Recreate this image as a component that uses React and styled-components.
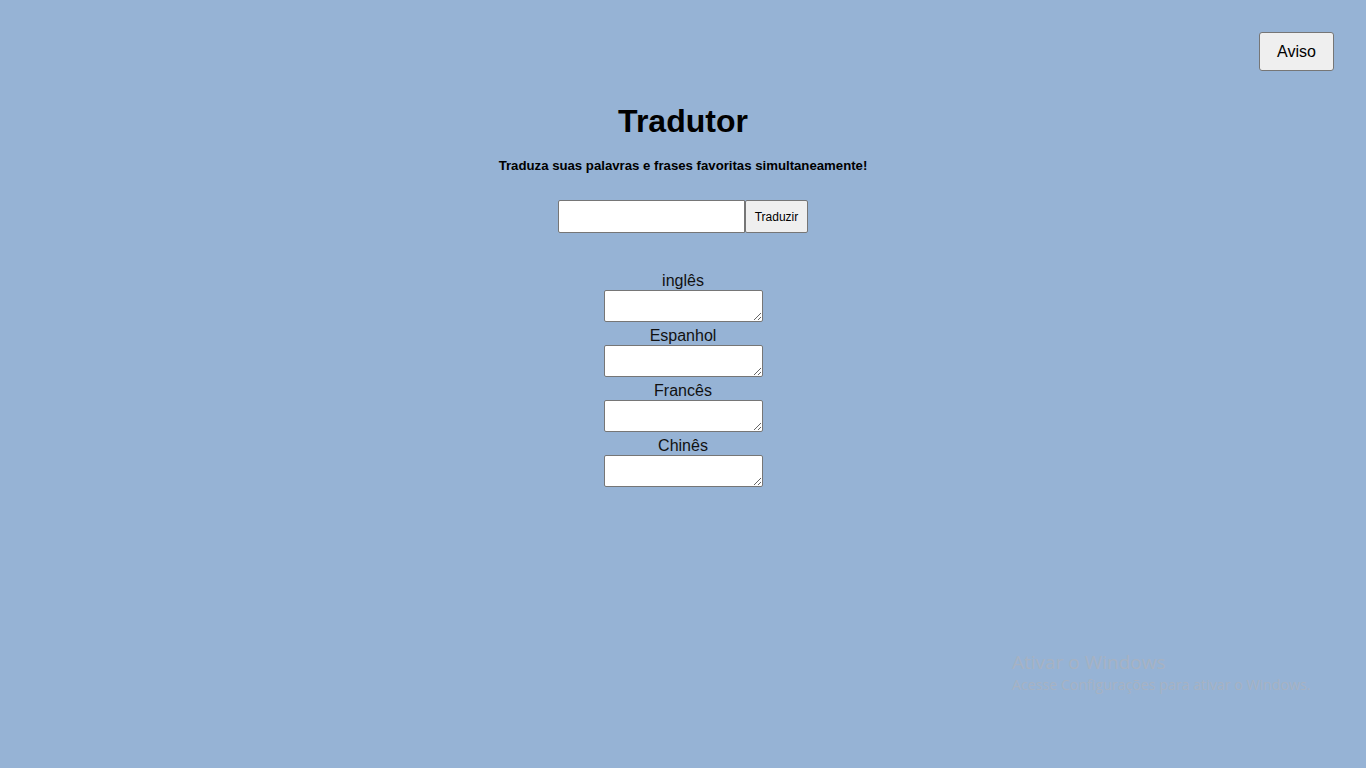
import React from "react";
import styled, { createGlobalStyle } from "styled-components";

const GlobalStyle = createGlobalStyle`
  html, body {
    margin: 0;
    padding: 0;
    background: #96b3d5;
    font-family: "Liberation Sans", Arial, sans-serif;
  }
  #root { min-height: 768px; }
`;

const Page = styled.div`
  position: relative;
  min-height: 768px;
  display: flex;
  flex-direction: column;
  align-items: stretch;
`;

const Header = styled.header`
  display: flex;
  justify-content: flex-end;
  padding: 32px 32px 0 0;
`;

const NativeButton = styled.button`
  box-sizing: border-box;
  font-family: "Liberation Sans", Arial, sans-serif;
  background: #efefef;
  color: #000;
  border: 1px solid #767676;
  border-radius: ${(p) => (p.$large ? "3px" : "2px")};
  font-size: ${(p) => (p.$large ? "16px" : "12px")};
  width: ${(p) => p.$w}px;
  height: ${(p) => p.$h}px;
  padding: 0;
  cursor: pointer;
`;

const Main = styled.main`
  display: flex;
  flex-direction: column;
  align-items: center;
`;

const Title = styled.h1`
  margin: 32px 0 0;
  font-size: 32px;
  line-height: 37px;
  font-weight: bold;
`;

const Subtitle = styled.p`
  margin: 18px 0 0;
  font-size: 13.2px;
  line-height: 15px;
  font-weight: bold;
`;

const SearchRow = styled.div`
  display: flex;
  margin-top: 27px;
`;

const TextInput = styled.input`
  box-sizing: border-box;
  width: 187px;
  height: 33px;
  border: 1px solid #767676;
  border-radius: 2px 0 0 2px;
  background: #fff;
  margin: 0;
  padding: 1px 2px;
  font-size: 13px;
`;

const Results = styled.div`
  display: flex;
  flex-direction: column;
  align-items: center;
  gap: 4px;
  margin-top: 38px;
`;

const Group = styled.div`
  display: flex;
  flex-direction: column;
  align-items: center;
`;

const Label = styled.label`
  font-size: 16px;
  line-height: 19px;
  color: #111;
`;

const Output = styled.textarea`
  box-sizing: border-box;
  width: 159px;
  height: 32px;
  border: 1px solid #767676;
  border-radius: 2px;
  background: #fff;
  margin: 0;
  padding: 2px;
  font-family: "Liberation Mono", monospace;
  font-size: 13px;
  display: block;
`;

const Watermark = styled.div`
  position: absolute;
  left: 1012px;
  top: 650px;
  color: #a7b2c2;
  font-family: "Open Sans", "Noto Sans", sans-serif;
  pointer-events: none;
`;

const WmTitle = styled.div`
  font-size: 19px;
  line-height: 24px;
`;

const WmText = styled.div`
  font-size: 14.2px;
  line-height: 20px;
  margin-top: 1px;
`;

const languages = ["inglês", "Espanhol", "Francês", "Chinês"];

export default function App() {
  return (
    <Page>
      <GlobalStyle />
      <Header>
        <NativeButton $large $w={75} $h={39}>Aviso</NativeButton>
      </Header>
      <Main>
        <Title>Tradutor</Title>
        <Subtitle>Traduza suas palavras e frases favoritas simultaneamente!</Subtitle>
        <SearchRow>
          <TextInput type="text" />
          <NativeButton $w={63} $h={33}>Traduzir</NativeButton>
        </SearchRow>
        <Results>
          {languages.map((l) => (
            <Group key={l}>
              <Label>{l}</Label>
              <Output readOnly />
            </Group>
          ))}
        </Results>
      </Main>
      <Watermark>
        <WmTitle>Ativar o Windows</WmTitle>
        <WmText>Acesse Configurações para ativar o Windows.</WmText>
      </Watermark>
    </Page>
  );
}
